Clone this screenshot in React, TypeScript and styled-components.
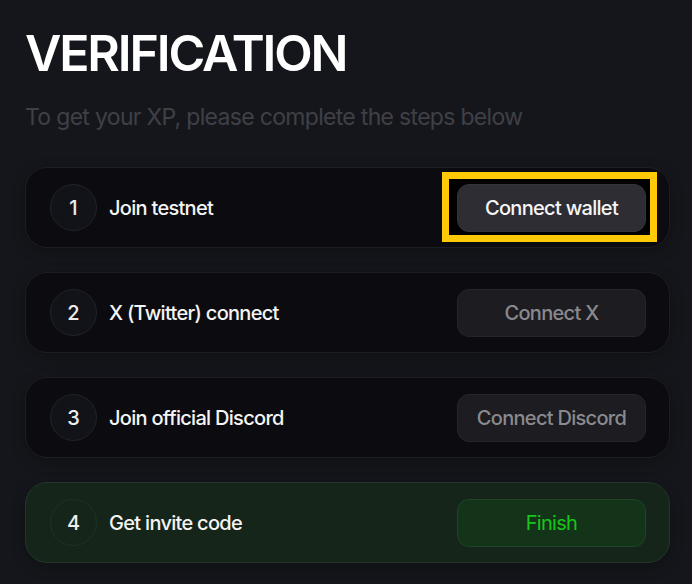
import * as React from "react"
import styled, { createGlobalStyle, css } from "styled-components"

const GlobalStyle = createGlobalStyle`
  html, body {
    margin: 0;
    padding: 0;
    background: #15161b;
  }
  body {
    font-family: Inter, "Liberation Sans", Arial, sans-serif;
    -webkit-font-smoothing: antialiased;
  }
`

type Variant = "primary" | "muted" | "success"

interface Step {
  n: number
  label: string
  action: string
  variant: Variant
  highlighted?: boolean
  done?: boolean
}

const steps: Step[] = [
  { n: 1, label: "Join testnet", action: "Connect wallet", variant: "primary", highlighted: true },
  { n: 2, label: "X (Twitter) connect", action: "Connect X", variant: "muted" },
  { n: 3, label: "Join official Discord", action: "Connect Discord", variant: "muted" },
  { n: 4, label: "Get invite code", action: "Finish", variant: "success", done: true },
]

const Page = styled.main`
  padding: 27px 22px 0 25px;
  min-height: 584px;
  box-sizing: border-box;
`

const Title = styled.h1`
  margin: 0;
  font-size: 50px;
  line-height: 52px;
  font-weight: 600;
  letter-spacing: -0.043em;
  color: #ffffff;
`

const Subtitle = styled.p`
  margin: 24px 0 0;
  font-size: 23px;
  line-height: 28px;
  font-weight: 400;
  letter-spacing: -0.03em;
  color: #3f4047;
`

const StepList = styled.ol`
  list-style: none;
  margin: 36px 0 0;
  padding: 0;
  display: flex;
  flex-direction: column;
  gap: 24px;
`

const Card = styled.li<{ $done?: boolean }>`
  height: 81px;
  box-sizing: border-box;
  display: flex;
  align-items: center;
  gap: 12px;
  padding: 0 23px 0 24px;
  border-radius: 22px;
  border: 1px solid ${(p) => (p.$done ? "#223728" : "#1d1e23")};
  background: ${(p) => (p.$done ? "#15251a" : "#0c0c10")};
  box-shadow: 0 4px 14px rgba(0, 0, 0, 0.25);
`

const Badge = styled.span<{ $done?: boolean }>`
  flex: none;
  width: 47px;
  height: 47px;
  box-sizing: border-box;
  border-radius: 50%;
  border: 1px solid ${(p) => (p.$done ? "#1f3324" : "#22232a")};
  background: ${(p) => (p.$done ? "#15251a" : "#121318")};
  display: flex;
  align-items: center;
  justify-content: center;
  font-size: 20px;
  font-weight: 500;
  color: #ececec;
`

const Label = styled.span`
  flex: 1;
  font-size: 20px;
  font-weight: 500;
  letter-spacing: -0.035em;
  color: #f4f4f4;
`

const Highlight = styled.span`
  position: relative;
  display: flex;
  z-index: 0;

  &::before {
    content: "";
    position: absolute;
    inset: -12px -11px -10px -15px;
    border: 7px solid #ffc907;
    background: #000000;
    z-index: -1;
  }
`

const variants = {
  primary: css`
    background: #2e2d34;
    border-color: #35343b;
    color: #f6f6f6;
  `,
  muted: css`
    background: #1c1c21;
    border-color: #25252a;
    color: #8a8a8e;
  `,
  success: css`
    background: #14341a;
    border-color: #1f4426;
    color: #19c41a;
    font-weight: 400;
  `,
}

const ActionButton = styled.button<{ $variant: Variant }>`
  width: 189px;
  height: 48px;
  box-sizing: border-box;
  border: 1px solid transparent;
  border-radius: 12px;
  font-family: inherit;
  font-size: 20px;
  font-weight: 500;
  letter-spacing: -0.035em;
  cursor: pointer;
  ${(p) => variants[p.$variant]}
`

export default function App() {
  return (
    <>
      <GlobalStyle />
      <Page>
        <Title>VERIFICATION</Title>
        <Subtitle>To get your XP, please complete the steps below</Subtitle>
        <StepList>
          {steps.map((s) => {
            const button = <ActionButton $variant={s.variant}>{s.action}</ActionButton>
            return (
              <Card key={s.n} $done={s.done}>
                <Badge $done={s.done}>{s.n}</Badge>
                <Label>{s.label}</Label>
                {s.highlighted ? <Highlight>{button}</Highlight> : button}
              </Card>
            )
          })}
        </StepList>
      </Page>
    </>
  )
}
